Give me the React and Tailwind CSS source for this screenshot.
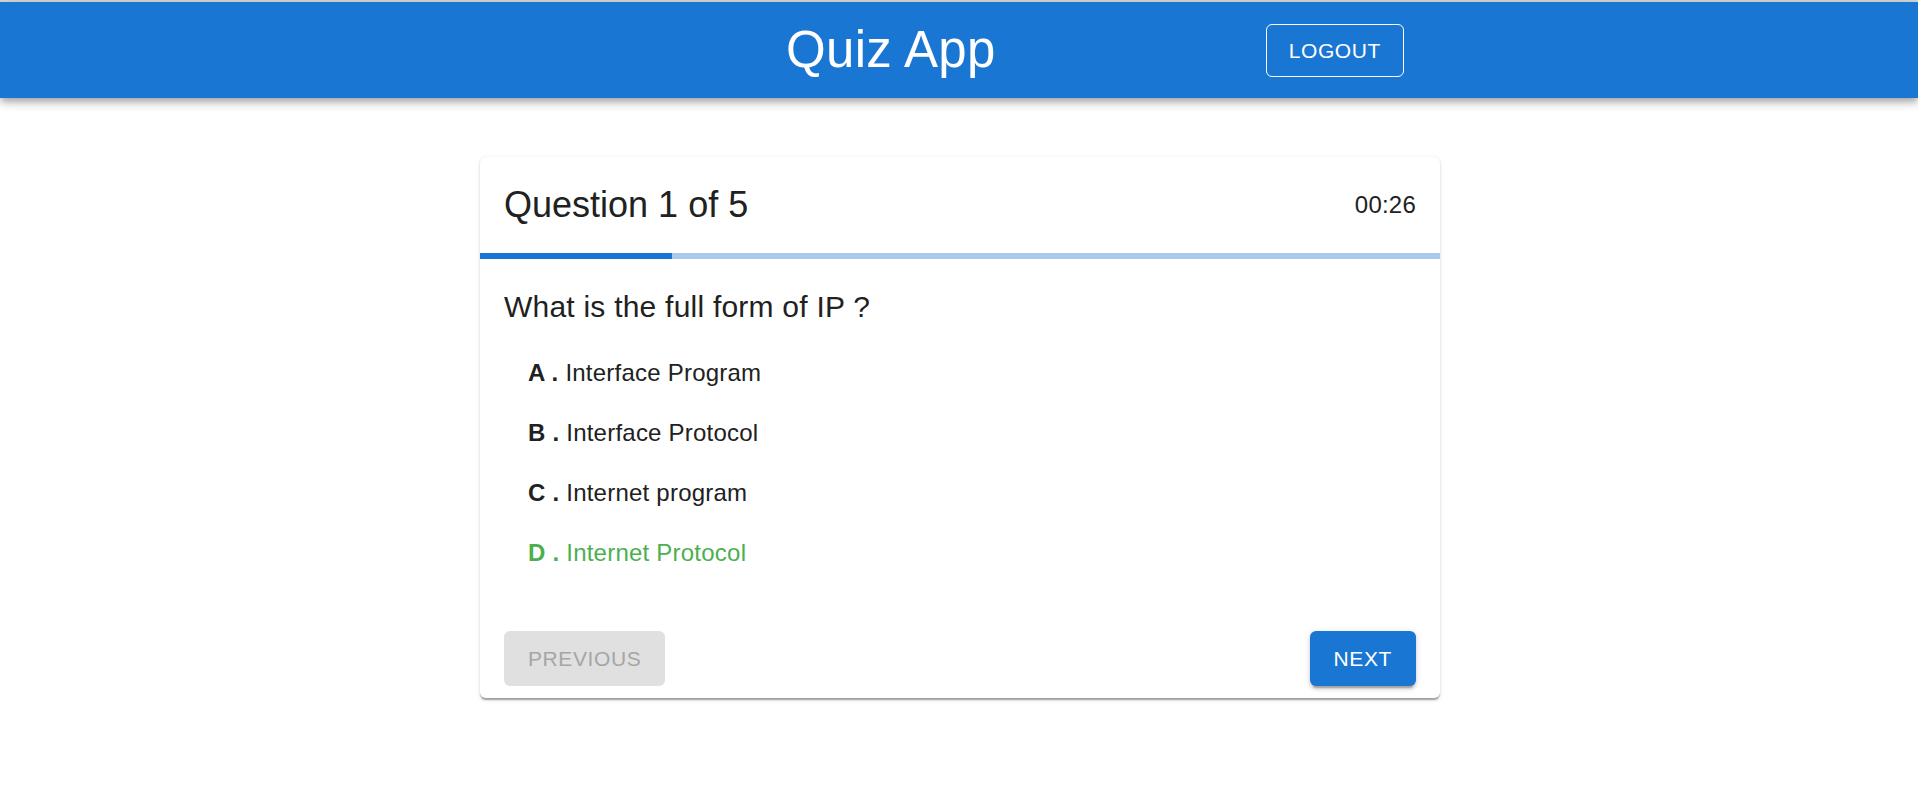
import { useState } from "react";

const options = [
  { key: "A", text: "Interface Program" },
  { key: "B", text: "Interface Protocol" },
  { key: "C", text: "Internet program" },
  { key: "D", text: "Internet Protocol" },
];

export default function App() {
  const [selected] = useState("D");
  const current = 1;
  const total = 5;

  return (
    <div className="min-h-screen bg-white font-['Liberation_Sans',Arial,sans-serif] text-[#212121]">
      <div className="h-[2px] bg-[#d4d4d4]"></div>
      <header className="relative z-10 bg-[#1976d2] h-[96px] shadow-[0_3px_6px_-1.5px_rgba(0,0,0,0.2),0_6px_7.5px_0_rgba(0,0,0,0.14),0_1.5px_15px_0_rgba(0,0,0,0.12)]">
        <div className="mx-auto w-[960px] h-full pl-[37px] pr-[35px] flex items-center">
          <h1 className="flex-1 text-center text-white text-[51px] leading-[1.2] font-normal tracking-[0.375px]">Quiz App</h1>
          <button className="h-[53px] px-[22px] rounded-[6px] border border-white text-white text-[21px] uppercase tracking-[0.6px] leading-none">
            Logout
          </button>
        </div>
      </header>

      <main className="flex justify-center pt-[59px] pl-[2px]">
        <div className="w-[960px] bg-white rounded-[6px] overflow-hidden shadow-[0_3px_1.5px_-1.5px_rgba(0,0,0,0.2),0_1.5px_1.5px_0_rgba(0,0,0,0.14),0_1.5px_4.5px_0_rgba(0,0,0,0.12)]">
          <div className="flex items-center justify-between p-[24px]">
            <h2 className="text-[36px] leading-[48px] font-normal">Question {current} of {total}</h2>
            <span className="text-[24px] leading-[36px] tracking-[0.225px]">00:26</span>
          </div>
          <div className="h-[6px] bg-[#a7caed]">
            <div className="h-full bg-[#1976d2]" style={{ width: `${(current / total) * 100}%` }}></div>
          </div>
          <div className="px-[24px] pt-[24px] pb-[24px]">
            <p className="text-[30px] leading-[48px] tracking-[0.225px]">What is the full form of IP ?</p>
            <ul className="py-[12px]">
              {options.map((o) => (
                <li
                  key={o.key}
                  className={
                    "px-[24px] py-[12px] text-[24px] leading-[36px] tracking-[0.225px] " +
                    (selected === o.key ? "text-[#4caf50]" : "text-[#212121]")
                  }
                >
                  <span className="font-bold">{o.key} .</span> {o.text}
                </li>
              ))}
            </ul>
          </div>
          <div className="flex justify-between px-[24px] pt-[12px] pb-[12px]">
            <button disabled className="h-[55px] px-[24px] rounded-[6px] bg-[#e0e0e0] text-[#a6a6a6] text-[21px] uppercase tracking-[0.6px] leading-none">
              Previous
            </button>
            <button className="h-[55px] px-[24px] rounded-[6px] bg-[#1976d2] text-white text-[21px] uppercase tracking-[0.6px] leading-none shadow-[0_4.5px_1.5px_-3px_rgba(0,0,0,0.2),0_3px_3px_0_rgba(0,0,0,0.14),0_1.5px_7.5px_0_rgba(0,0,0,0.12)]">
              Next
            </button>
          </div>
        </div>
      </main>
    </div>
  );
}
